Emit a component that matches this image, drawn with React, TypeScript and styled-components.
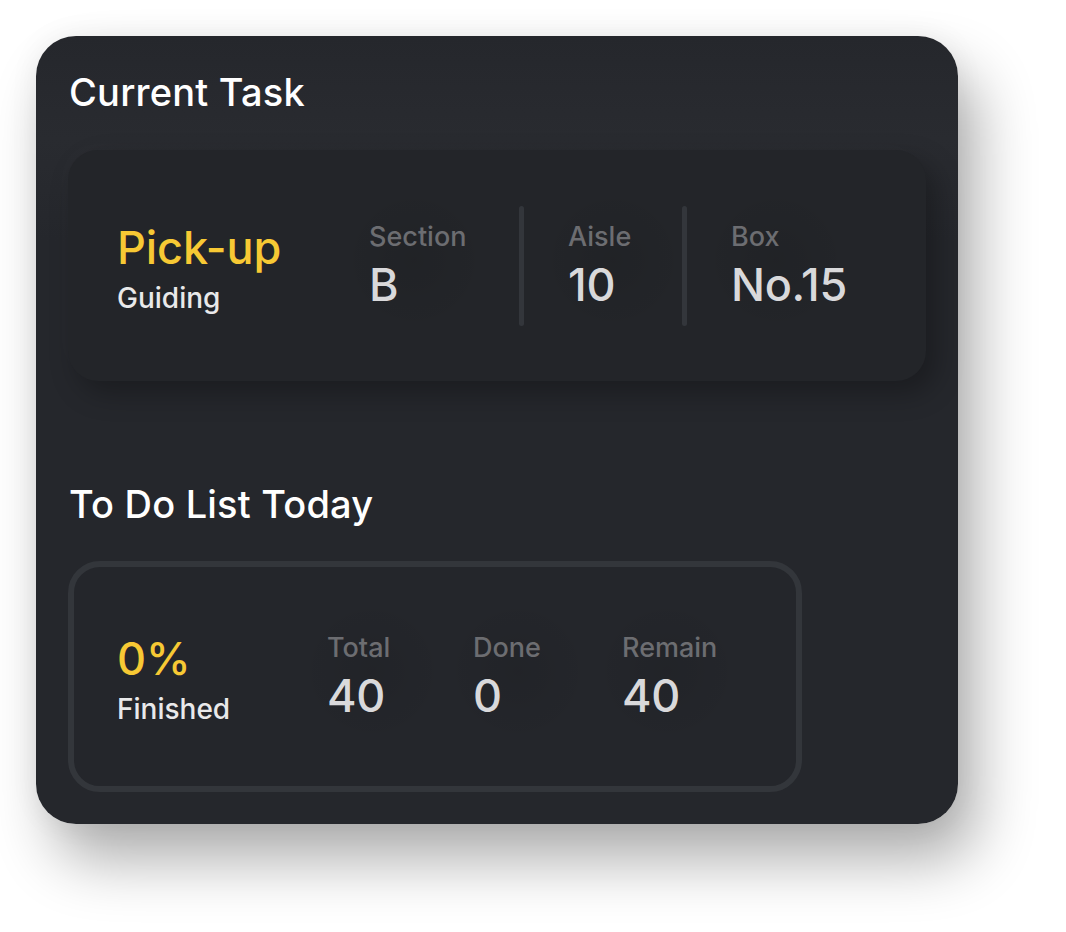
import React from "react";
import styled, { createGlobalStyle } from "styled-components";

const GlobalStyle = createGlobalStyle`
  html, body {
    margin: 0;
    padding: 0;
    background: #ffffff;
  }
  body {
    font-family: Inter, "Noto Sans", sans-serif;
  }
`;

const Page = styled.div`
  padding: 36px 0 0 36px;
  width: 1066px;
  height: 932px;
  box-sizing: border-box;
`;

const Panel = styled.section`
  width: 922px;
  height: 788px;
  box-sizing: border-box;
  padding: 32px;
  border-radius: 40px;
  background: linear-gradient(180deg, #25272c 0%, #292b30 13%, #25272c 26%, #25272c 100%);
  box-shadow: 18px 36px 60px rgba(0, 0, 0, 0.32), 0 0 30px rgba(0, 0, 0, 0.06);
  display: flex;
  flex-direction: column;
`;

const Title = styled.h2<{ $top?: number }>`
  margin: ${(p) => p.$top ?? 0}px 0 0 1px;
  font-size: 38px;
  line-height: 48px;
  font-weight: 500;
  color: #ffffff;
  letter-spacing: 0.2px;
`;

const TaskCard = styled.div`
  margin-top: 34px;
  width: 858px;
  height: 232px;
  box-sizing: border-box;
  padding: 2px 0 0 49px;
  border-radius: 30px;
  background: #232529;
  box-shadow: 10px 12px 28px rgba(0, 0, 0, 0.28), -6px -6px 20px rgba(255, 255, 255, 0.015);
  display: flex;
  align-items: center;
`;

const ListCard = styled.div`
  margin-top: 33px;
  width: 734px;
  height: 232px;
  box-sizing: border-box;
  padding: 2px 0 0 43px;
  border: 6px solid #33363b;
  border-radius: 32px;
  background: #24262b;
  display: flex;
  align-items: center;
`;

const Lead = styled.div<{ $width: number }>`
  width: ${(p) => p.$width}px;
  margin-top: 5px;
  display: flex;
  flex-direction: column;
`;

const Headline = styled.div`
  font-size: 45px;
  line-height: 48px;
  font-weight: 500;
  color: #f7c934;
  letter-spacing: -0.1px;
`;

const Caption = styled.div`
  font-size: 28px;
  line-height: 32px;
  font-weight: 500;
  color: #e9e9ea;
  margin-top: 10px;
`;

const Stat = styled.div<{ $width?: number }>`
  position: relative;
  width: ${(p) => (p.$width ? `${p.$width}px` : "auto")};
  display: flex;
  flex-direction: column;

  &::before {
    content: "";
    position: absolute;
    left: -30px;
    top: -36px;
    width: 150px;
    height: 150px;
    border-radius: 50%;
    background: radial-gradient(circle, rgba(0, 0, 0, 0.07) 0%, rgba(0, 0, 0, 0) 70%);
    pointer-events: none;
  }
`;

const Label = styled.div`
  position: relative;
  font-size: 27px;
  line-height: 32px;
  font-weight: 500;
  color: #6c6d71;
`;

const Value = styled.div`
  position: relative;
  margin-top: 6px;
  font-size: 45px;
  line-height: 52px;
  font-weight: 500;
  color: #d9d9db;
  letter-spacing: -0.3px;
`;

const Divider = styled.div`
  width: 5px;
  height: 120px;
  border-radius: 3px;
  background: #33363b;
  margin: 0 44px 0 0;
`;

const stats = [
  { label: "Section", value: "B", width: 150 },
  { label: "Aisle", value: "10", width: 114 },
  { label: "Box", value: "No.15" },
];

const todo = [
  { label: "Total", value: "40", width: 146 },
  { label: "Done", value: "0", width: 149 },
  { label: "Remain", value: "40" },
];

export default function App() {
  return (
    <Page>
      <GlobalStyle />
      <Panel>
        <Title>Current Task</Title>
        <TaskCard>
          <Lead $width={252}>
            <Headline>Pick-up</Headline>
            <Caption>Guiding</Caption>
          </Lead>
          {stats.map((s, i) => (
            <React.Fragment key={s.label}>
              {i > 0 && <Divider />}
              <Stat $width={s.width}>
                <Label>{s.label}</Label>
                <Value>{s.value}</Value>
              </Stat>
            </React.Fragment>
          ))}
        </TaskCard>

        <Title $top={99}>To Do List Today</Title>
        <ListCard>
          <Lead $width={210}>
            <Headline>0%</Headline>
            <Caption>Finished</Caption>
          </Lead>
          {todo.map((s) => (
            <Stat key={s.label} $width={s.width}>
              <Label>{s.label}</Label>
              <Value>{s.value}</Value>
            </Stat>
          ))}
        </ListCard>
      </Panel>
    </Page>
  );
}
